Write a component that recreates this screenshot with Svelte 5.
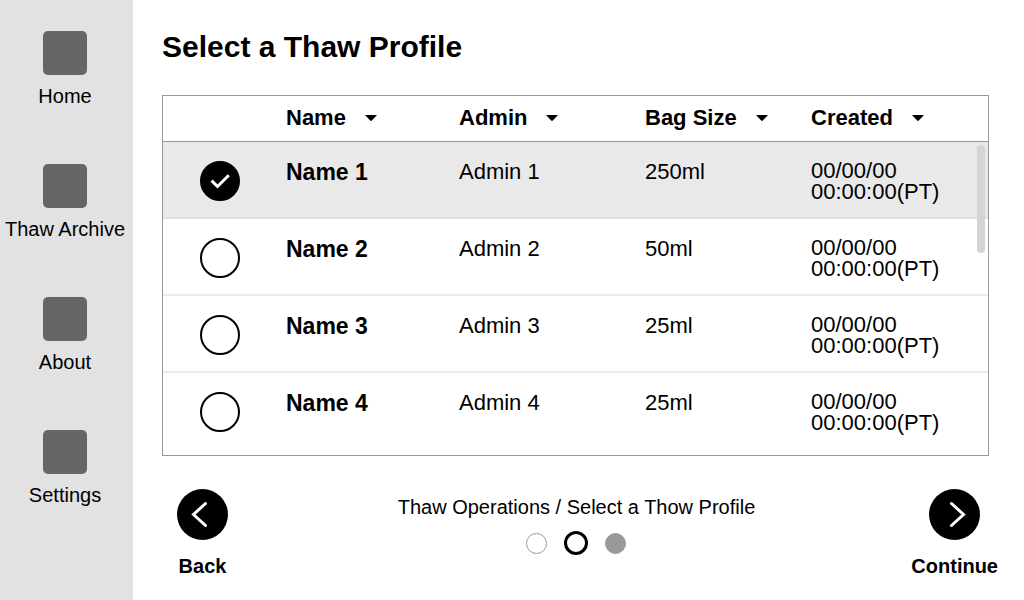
<script>
    const navItems = ['Home', 'Thaw Archive', 'About', 'Settings'];
    const columns = [
        { key: 'name', label: 'Name' },
        { key: 'admin', label: 'Admin' },
        { key: 'size', label: 'Bag Size' },
        { key: 'date', label: 'Created' }
    ];

    let profiles = [
        { id: 1, name: 'Name 1', admin: 'Admin 1', size: '250ml', date: '00/00/00', time: '00:00:00(PT)' },
        { id: 2, name: 'Name 2', admin: 'Admin 2', size: '50ml', date: '00/00/00', time: '00:00:00(PT)' },
        { id: 3, name: 'Name 3', admin: 'Admin 3', size: '25ml', date: '00/00/00', time: '00:00:00(PT)' },
        { id: 4, name: 'Name 4', admin: 'Admin 4', size: '25ml', date: '00/00/00', time: '00:00:00(PT)' }
    ];
    let selected = 1;

    function sortBy(key) {
        profiles = [...profiles].sort((a, b) => a[key].localeCompare(b[key], 'en', { numeric: true }));
    }
</script>

<div class="layout">
    <nav class="sidebar">
        {#each navItems as item}
            <a class="nav-item" href="#{item.toLowerCase().replace(' ', '-')}">
                <span class="nav-icon"></span>
                <span>{item}</span>
            </a>
        {/each}
    </nav>

    <main>
        <h1>Select a Thaw Profile</h1>

        <div class="table-frame">
            <table>
                <colgroup>
                    <col class="col-pick" />
                    <col class="col-name" />
                    <col class="col-admin" />
                    <col class="col-size" />
                    <col class="col-created" />
                </colgroup>
                <thead>
                    <tr>
                        <td></td>
                        {#each columns as column}
                            <th scope="col">
                                <button class="sort" on:click={() => sortBy(column.key)}>
                                    {column.label}
                                    <svg width="12" height="6" viewBox="0 0 12 6" aria-hidden="true">
                                        <path d="M0 0H12L6.8 5.6Q6 6.3 5.2 5.6Z" />
                                    </svg>
                                </button>
                            </th>
                        {/each}
                    </tr>
                </thead>
                <tbody>
                    {#each profiles as profile (profile.id)}
                        <tr class:selected={selected === profile.id}>
                            <td class="pick">
                                <span class="radio">
                                    <input
                                        type="radio"
                                        name="profile"
                                        id="profile-{profile.id}"
                                        value={profile.id}
                                        bind:group={selected}
                                    />
                                    {#if selected === profile.id}
                                        <svg width="40" height="40" viewBox="0 0 40 40" aria-hidden="true">
                                            <path d="M11.6 19.6L17.5 25.5L28.8 14.2" />
                                        </svg>
                                    {/if}
                                </span>
                            </td>
                            <td class="name"><label for="profile-{profile.id}">{profile.name}</label></td>
                            <td>{profile.admin}</td>
                            <td>{profile.size}</td>
                            <td class="created">{profile.date}<br />{profile.time}</td>
                        </tr>
                    {/each}
                </tbody>
            </table>
            <span class="scroll-thumb"></span>
        </div>

        <footer>
            <button class="step back">
                <svg width="51" height="51" viewBox="0 0 51 51" aria-hidden="true">
                    <circle cx="25.5" cy="25.5" r="25.5" />
                    <path d="M28.5 14.5L16.5 25.5L28.5 36.5" />
                </svg>
                Back
            </button>
            <div class="progress">
                <span>Thaw Operations / Select a Thow Profile</span>
                <div class="dots">
                    <span class="dot"></span>
                    <span class="dot current"></span>
                    <span class="dot filled"></span>
                </div>
            </div>
            <button class="step continue">
                <svg width="51" height="51" viewBox="0 0 51 51" aria-hidden="true">
                    <circle cx="25.5" cy="25.5" r="25.5" />
                    <path d="M22.5 14.5L34.5 25.5L22.5 36.5" />
                </svg>
                Continue
            </button>
        </footer>
    </main>
</div>

<style>
    :global(body) {
        background: #fff;
        color: #000;
        font-family: 'Liberation Sans', Arial, Helvetica, sans-serif;
    }

    .layout {
        display: flex;
        min-height: 100vh;
        font-size: 20px;
        line-height: 24px;
    }

    .sidebar {
        box-sizing: border-box;
        flex: none;
        display: flex;
        flex-direction: column;
        gap: 56px;
        width: 133px;
        padding: 31px 3px 0 0;
        background: #e2e2e2;
    }

    .nav-item {
        display: flex;
        flex-direction: column;
        align-items: center;
        gap: 9px;
        color: inherit;
        text-decoration: none;
        white-space: nowrap;
    }

    .nav-icon {
        width: 44px;
        height: 44px;
        border-radius: 5px;
        background: #666;
    }

    main {
        flex: 1;
        padding: 29px 35px 0 29px;
    }

    h1 {
        margin: 0 0 30px;
        font-size: 30px;
        line-height: 36px;
    }

    .table-frame {
        position: relative;
        border: 1px solid #999;
    }

    table {
        width: 100%;
        table-layout: fixed;
        border-collapse: separate;
        border-spacing: 0;
        font-size: 22px;
        line-height: 24px;
    }

    .col-pick {
        width: 123px;
    }

    .col-name {
        width: 173px;
    }

    .col-admin {
        width: 186px;
    }

    .col-size {
        width: 166px;
    }

    .col-created {
        width: 177px;
    }

    th,
    td {
        box-sizing: border-box;
        padding: 0;
        text-align: left;
        vertical-align: top;
    }

    thead th,
    thead td {
        height: 46px;
        padding-bottom: 2px;
        border-bottom: 1px solid #999;
        vertical-align: middle;
    }

    button {
        padding: 0;
        border: 0;
        background: none;
        color: inherit;
        font: inherit;
        font-weight: bold;
        cursor: pointer;
    }

    .sort {
        display: flex;
        align-items: center;
        gap: 19px;
        white-space: nowrap;
    }

    tbody td {
        height: 77px;
        padding-top: 18px;
        border-bottom: 2px solid #ebebeb;
    }

    tbody tr:last-child td {
        height: 82px;
        border-bottom: 0;
    }

    tbody .selected td {
        background: #e9e9e9;
        border-bottom-color: #e0e0e0;
    }

    tbody .pick {
        padding: 19px 0 0 37px;
    }

    .name {
        font-size: 23px;
        font-weight: bold;
    }

    .created {
        line-height: 21px;
    }

    .radio {
        display: grid;
        width: 40px;
        height: 40px;
    }

    .radio input,
    .radio svg {
        grid-area: 1 / 1;
    }

    .radio input {
        appearance: none;
        box-sizing: border-box;
        width: 40px;
        height: 40px;
        margin: 0;
        border: 2px solid #000;
        border-radius: 50%;
        background: #fff;
    }

    .radio input:checked {
        background: #000;
    }

    .radio svg {
        fill: none;
        stroke: #fff;
        stroke-width: 3;
        pointer-events: none;
    }

    .scroll-thumb {
        position: absolute;
        top: 49px;
        right: 3px;
        width: 8px;
        height: 108px;
        border-radius: 4px;
        background: #d4d4d4;
    }

    footer {
        display: grid;
        grid-template-columns: 1fr auto 1fr;
        align-items: start;
        padding-top: 33px;
    }

    .step {
        display: flex;
        flex-direction: column;
        align-items: center;
        gap: 14px;
    }

    .step circle {
        fill: #000;
    }

    .step path {
        fill: none;
        stroke: #fff;
        stroke-width: 3;
        stroke-linecap: round;
    }

    .back {
        justify-self: start;
        margin-left: 15px;
    }

    .continue {
        justify-self: end;
        margin-right: -9px;
    }

    .progress {
        display: flex;
        flex-direction: column;
        align-items: center;
        gap: 12px;
        padding: 6px 0 0 2px;
        white-space: nowrap;
    }

    .dots {
        display: flex;
        align-items: center;
        gap: 17px;
    }

    .dot {
        box-sizing: border-box;
        width: 21px;
        height: 21px;
        border: 1px solid #999;
        border-radius: 50%;
    }

    .current {
        width: 24px;
        height: 24px;
        border: 3px solid #000;
    }

    .filled {
        background: #999;
    }
</style>
